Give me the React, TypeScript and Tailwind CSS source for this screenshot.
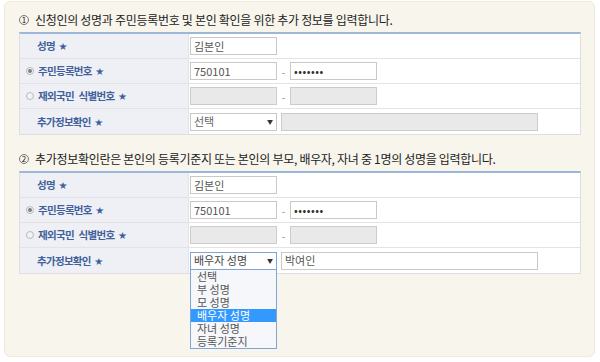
import React from "react";

const font = "font-['Noto_Sans_CJK_KR','Noto_Sans',sans-serif]";

function Star() {
  return <span className="ml-[4px] text-[8px] tracking-normal text-[#3d5f9c]">★</span>;
}

function Radio({ checked }: { checked?: boolean }) {
  return (
    <span className="mr-[4px] flex h-[8px] w-[8px] items-center justify-center rounded-full border border-[#b9b9b9] bg-[#f3f3f3]">
      {checked && <span className="h-[4px] w-[4px] rounded-full bg-[#808080]" />}
    </span>
  );
}

function Box({ value, disabled, w = "w-[87px]", dots }: { value?: string; disabled?: boolean; w?: string; dots?: boolean }) {
  return (
    <div
      className={`flex h-[18px] ${w} items-center border px-[3px] text-[11px] ${
        disabled ? "border-[#cccccc] bg-[#e9e9e9]" : "border-[#c8c8c8] bg-white"
      } ${dots ? "text-[8px] tracking-[0.5px] text-[#333]" : "text-[#555]"}`}
    >
      {value}
    </div>
  );
}

function Dash() {
  return <span className="w-[13px] text-center text-[10px] text-[#888]">-</span>;
}

function SelectBox({ value, focused }: { value: string; focused?: boolean }) {
  return (
    <div
      className={`flex h-[18px] w-[87px] items-center justify-between border bg-white pl-[3px] pr-[3px] text-[11px] ${
        focused ? "border-[#7fa5d6] text-[#444]" : "border-[#c8c8c8] text-[#666]"
      }`}
    >
      <span>{value}</span>
      <span className="text-[6px] text-[#333]">▼</span>
    </div>
  );
}

function Row({ label, radio, children, last }: { label: string; radio?: "on" | "off"; children: React.ReactNode; last?: boolean }) {
  return (
    <div className={`flex h-[25px] ${last ? "" : "border-b border-[#e3e3e3]"}`}>
      <div
        className={`flex w-[169px] items-center border-r border-[#e3e3e3] bg-[#eef0f5] text-[10.5px] font-bold tracking-[-0.7px] text-[#42609a] [word-spacing:3px] ${
          radio ? "pl-[6px]" : "pl-[17px]"
        }`}
      >
        {radio && <Radio checked={radio === "on"} />}
        <span>{label}</span>
        <Star />
      </div>
      <div className="relative flex flex-1 items-center pl-[1px]">{children}</div>
    </div>
  );
}

function Heading({ n, text }: { n: number; text: string }) {
  return (
    <div className="flex h-[20px] items-center text-[12px] text-[#222]">
      <span className="mr-[6px] flex h-[10px] w-[10px] items-center justify-center rounded-full border border-[#777] text-[8px] leading-none">
        {n}
      </span>
      <span className="tracking-[-0.3px]">{text}</span>
    </div>
  );
}

const options = ["선택", "부 성명", "모 성명", "배우자 성명", "자녀 성명", "등록기준지"];

export default function App() {
  return (
    <div className={`h-[362px] w-[600px] bg-white pl-[4px] pt-[1px] ${font}`}>
      <div className="h-[356px] w-[591px] rounded-[6px] border border-[#efe9da] bg-[#f8f5ed] pl-[14px] pt-[8px]">
        <Heading n={1} text="신청인의 성명과 주민등록번호 및 본인 확인을 위한 추가 정보를 입력합니다." />
        <div className="mt-[2px] w-[562px] border border-t-2 border-[#dedede] border-t-[#9db7db] bg-white">
          <Row label="성명">
            <Box value="김본인" />
          </Row>
          <Row label="주민등록번호" radio="on">
            <Box value="750101" />
            <Dash />
            <Box value="•••••••" dots />
          </Row>
          <Row label="재외국민 식별번호" radio="off">
            <Box disabled />
            <Dash />
            <Box disabled />
          </Row>
          <Row label="추가정보확인" last>
            <SelectBox value="선택" />
            <div className="ml-[4px]">
              <Box disabled w="w-[257px]" />
            </div>
          </Row>
        </div>

        <div className="mt-[14px]">
          <Heading n={2} text="추가정보확인란은 본인의 등록기준지 또는 본인의 부모, 배우자, 자녀 중 1명의 성명을 입력합니다." />
        </div>
        <div className="mt-[2px] w-[562px] border border-t-2 border-[#dedede] border-t-[#9db7db] bg-white">
          <Row label="성명">
            <Box value="김본인" />
          </Row>
          <Row label="주민등록번호" radio="on">
            <Box value="750101" />
            <Dash />
            <Box value="•••••••" dots />
          </Row>
          <Row label="재외국민 식별번호" radio="off">
            <Box disabled />
            <Dash />
            <Box disabled />
          </Row>
          <Row label="추가정보확인" last>
            <SelectBox value="배우자 성명" focused />
            <div className="ml-[4px]">
              <Box value="박여인" w="w-[257px]" />
            </div>
            <ul className="absolute left-[1px] top-[21px] z-10 w-[87px] border border-[#7fa5d6] bg-[#f5f7fa] text-[11px] leading-[13px] text-[#555]">
              {options.map((o) => (
                <li
                  key={o}
                  className={`flex h-[13px] items-center pl-[6px] ${o === "배우자 성명" ? "bg-[#3399ff] text-white" : ""}`}
                >
                  {o}
                </li>
              ))}
            </ul>
          </Row>
        </div>
      </div>
    </div>
  );
}
